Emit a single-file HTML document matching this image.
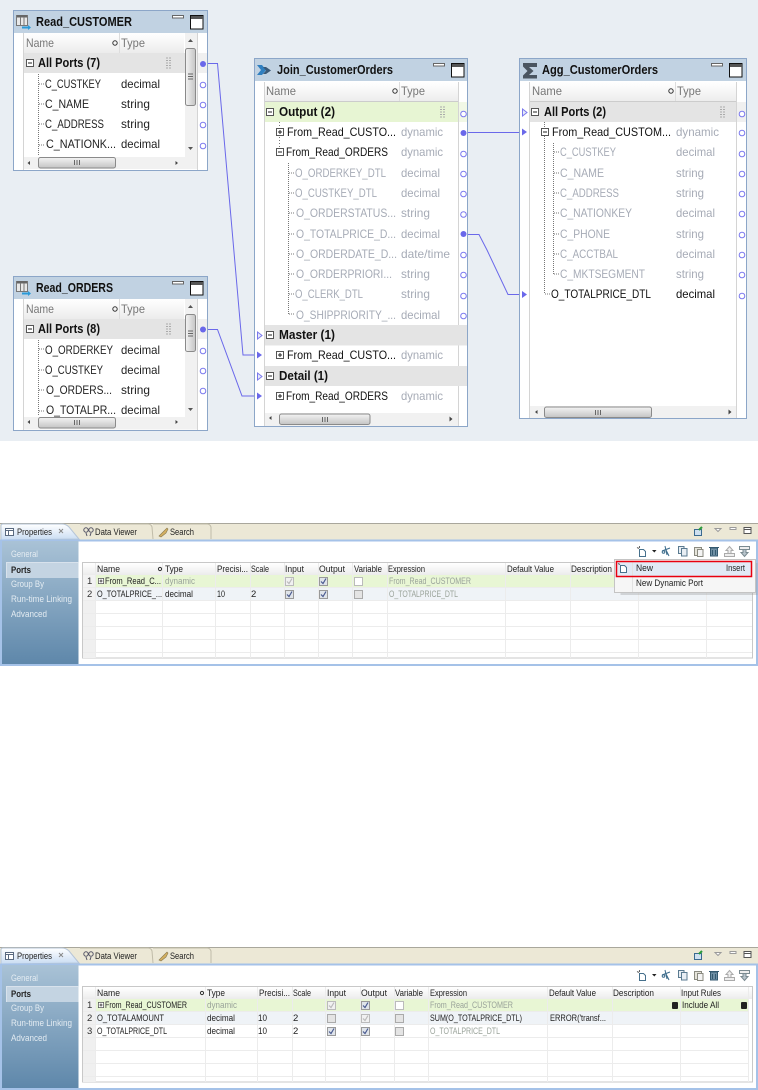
<!DOCTYPE html>
<html><head><meta charset="utf-8"><title>Mapping</title>
<style>
html,body{margin:0;padding:0;background:#fff;width:758px;height:1090px;overflow:hidden}
svg{display:block;font-family:"Liberation Sans",sans-serif}
.b{font-size:12.5px;font-weight:bold;fill:#111}
.h{font-size:12px;fill:#777}
.r{font-size:12px;fill:#222}
.k{font-size:12px;fill:#111}
.g{font-size:12px;fill:#a6abb6}
.s{font-size:9.5px;fill:#222}
.sg{font-size:9.5px;fill:#9aa39a}
.m{font-size:9.5px;fill:#222}
.w{font-size:9.5px;fill:#e4ecf2}
.n{font-size:9.5px;fill:#333}
.soft{filter:blur(.3px)}
</style></head><body>
<svg width="758" height="1090" viewBox="0 0 758 1090" xmlns="http://www.w3.org/2000/svg">
<defs>
<linearGradient id="hd" x1="0" y1="0" x2="0" y2="1"><stop offset="0" stop-color="#fff"/><stop offset="1" stop-color="#ececec"/></linearGradient>
<linearGradient id="th" x1="0" y1="0" x2="0" y2="1"><stop offset="0" stop-color="#f4f4f4"/><stop offset="1" stop-color="#c4c4c4"/></linearGradient>
<linearGradient id="tv" x1="0" y1="0" x2="1" y2="0"><stop offset="0" stop-color="#f4f4f4"/><stop offset="1" stop-color="#c4c4c4"/></linearGradient>
<linearGradient id="side" x1="0" y1="0" x2="0" y2="1"><stop offset="0" stop-color="#a9c2d6"/><stop offset="1" stop-color="#5e87aa"/></linearGradient>
<linearGradient id="tab" x1="0" y1="0" x2="0" y2="1"><stop offset="0" stop-color="#fff"/><stop offset="1" stop-color="#c9dcf2"/></linearGradient>
<g id="o"><circle r="2.8" fill="#fff" stroke="#7a78ee" stroke-width="1"/></g>
<g id="f"><circle r="3" fill="#6a68ea"/></g>
<g id="minus"><rect x=".5" y=".5" width="7" height="7" fill="#fff" stroke="#555"/><path d="M2 4h4" stroke="#222"/></g>
<g id="plus"><rect x=".5" y=".5" width="7" height="7" fill="#fff" stroke="#555"/><path d="M2 4h4M4 2v4" stroke="#222"/></g>
<g id="grip"><path d="M0 0h5M0 2.5h5M0 5h5M0 7.5h5M0 10h5" stroke="#aaa" stroke-dasharray="2 1" fill="none"/></g>
<g id="win"><rect x=".5" y=".5" width="11" height="2.5" fill="#fff" stroke="#666"/><rect x="18.5" y=".5" width="12.5" height="13.5" fill="#fff" stroke="#111"/><rect x="19" y="1" width="12" height="3" fill="#555"/></g>
<g id="tri"><path d="M.5 0L5 3.5.5 7z" fill="#e6eaf8" stroke="#7a78ee"/></g>
<g id="arr"><path d="M0 -3.500L5 0 0 3.500z" fill="#6a68ea"/></g>
<g id="ca"><path d="M0 2L2.500 0v4z" fill="#444"/></g>
<g id="cb"><rect x=".5" y=".5" width="8" height="8" fill="#dfe4ea" stroke="#999"/><path d="M2 4.500l2 2 3-5" fill="none" stroke="#4a5a90" stroke-width="1.200"/></g>
<g id="cg"><rect x=".5" y=".5" width="8" height="8" fill="#f1f1f1" stroke="#bbb"/><path d="M2 4.500l2 2 3-5" fill="none" stroke="#bbb" stroke-width="1.200"/></g>
<g id="ce"><rect x=".5" y=".5" width="8" height="8" fill="#fff" stroke="#bbb"/></g>
<g id="cd"><rect x=".5" y=".5" width="8" height="8" fill="#e4e4e4" stroke="#aaa"/></g>
<g id="tico"><rect x=".5" y="1.500" width="11" height="10" fill="#e8e8e8" stroke="#777"/><rect x="1" y="1" width="10" height="2.500" fill="#666"/><path d="M4.500 3v8M8 3v8" stroke="#777"/><path d="M6 13.500h7" stroke="#2a9ad8" stroke-width="2"/><path d="M12 11l3 2.500-3 2.500z" fill="#2a9ad8"/></g>
<g id="chrome">
<rect x="0" y="523" width="758" height="17" fill="#ece8d6"/>
<path d="M0 523.500H758" stroke="#a9a79c"/>
<path d="M1 540V526q0-2 2-2H62q4 0 7 3l10 12z" fill="url(#tab)" stroke="#b5c5d8"/>
<path d="M80 524H148q3 0 4 3l1 12" fill="none" stroke="#c0bca9"/>
<path d="M153 524H207q3 0 4 3v12" fill="none" stroke="#c0bca9"/>
<rect x="0" y="539.500" width="758" height="2" fill="#a5c2e8"/>
<rect x="0" y="541" width="2" height="125" fill="#a5c2e8"/>
<rect x="756" y="541" width="2" height="125" fill="#a5c2e8"/>
<rect x="0" y="664" width="758" height="2" fill="#a5c2e8"/>
<rect x="2" y="541" width="76.500" height="123" fill="url(#side)"/>
<rect x="6" y="562" width="72.500" height="16" fill="#c4d4e2"/>
<path d="M6.500 578V562.500H78" fill="none" stroke="#d8e2ec"/>
<g transform="translate(5,528)"><rect x=".5" y=".5" width="8" height="7" fill="#fff" stroke="#5a6a80"/><path d="M1 2.500h7M3.500 2.500v5" stroke="#5a6a80"/></g>
<path d="M59 529l4 4m0-4l-4 4" stroke="#888" fill="none"/>
<g transform="translate(83,527)" fill="none" stroke="#556"><circle cx="3" cy="3" r="2.200"/><circle cx="8" cy="3" r="2.200"/><path d="M3 6l1 3M8 6l-1 3"/></g>
<g transform="translate(158,527)"><path d="M1 9l5-5 3-3 1 1-2 4-5 4z" fill="#d4b060" stroke="#8a7a50" stroke-width=".6"/></g>
<g transform="translate(694,526)"><rect x=".5" y="3.500" width="7" height="6" fill="#cfe0f0" stroke="#3a6a90"/><path d="M5 4l3-3" stroke="#2a9a3a" stroke-width="2"/></g>
<path d="M715 528.500h6l-3 3z" fill="#fff" stroke="#9a9a9a"/>
<rect x="730" y="527.500" width="6" height="2" fill="#fff" stroke="#9a9a9a"/>
<rect x="744" y="527.500" width="7" height="6" fill="#fff" stroke="#555"/><path d="M744 529.500h7" stroke="#555"/>
<g transform="translate(637,546)" fill="none" stroke="#46708c"><path d="M2.500 3.500h4l2 2v5h-6z" fill="#fff"/><path d="M0 1.500l2 1M2.500 0v2" stroke="#666"/></g>
<path d="M652 550h4.500l-2.200 2.500z" fill="#222"/>
<g transform="translate(662,546)" fill="none" stroke="#3a6a8a"><path d="M0 5l8-3M4 4l3 6M3 0l2 9"/><circle cx="1.500" cy="6" r="1.300"/></g>
<g transform="translate(678,546)" stroke="#5a7a90" fill="#e8eef4"><rect x=".5" y=".5" width="5.500" height="7"/><rect x="3.500" y="2.500" width="5.500" height="7.500"/></g>
<g transform="translate(694,546)" stroke="#8a8a80" fill="#e6e4da"><rect x=".5" y="1.500" width="7" height="8"/><rect x="3.500" y="3.500" width="5.500" height="7" fill="#f4f4f4"/></g>
<g transform="translate(709,546)"><rect x="1.500" y="2" width="7" height="8" fill="#6f8fa4" stroke="#355a70"/><path d="M0 1.500h10M3.500 4v5M6.500 4v5" stroke="#355a70"/></g>
<g transform="translate(724,546)" stroke="#aaa" fill="#eee"><path d="M.5 7.500h10v3h-10z"/><path d="M5.500 .5l3.500 4h-2v3h-3v-3h-2z"/></g>
<g transform="translate(739,546)" stroke="#7a8a90" fill="#eee"><path d="M.5 .5h10v3h-10z"/><path d="M5.500 10.500l3.500-4h-2v-3h-3v3h-2z" fill="#b8c4cc"/></g>
</g>
</defs>

<rect x="0" y="0" width="758" height="441" fill="#e9eef3"/>

<!-- links -->
<g fill="none" stroke="#6a68ea" stroke-width="1">
<path d="M204 63.500H217.500L243 355H258"/>
<path d="M204 329.500H217.500L242 396H258"/>
<path d="M464 132.500H523"/>
<path d="M464 234.500H479L487 250 508 294.500H523"/>
</g>

<!-- Read_CUSTOMER -->
<rect x="13.500" y="10.500" width="194" height="160" fill="#fff" stroke="#8ca6c8"/>
<rect x="14" y="11" width="193" height="22" fill="#c1d2e2"/>
<use href="#tico" x="16" y="14"/>
<text x="36" y="26" class="b" textLength="96" lengthAdjust="spacingAndGlyphs">Read_CUSTOMER</text>
<use href="#win" x="172" y="15"/>
<rect x="24" y="33" width="160" height="20" fill="url(#hd)"/>
<path d="M23.500 33V170M197.500 33V170" stroke="#d4d4d4"/>
<path d="M119.500 33V53" stroke="#ddd"/>
<text x="26" y="47" class="h" textLength="28" lengthAdjust="spacingAndGlyphs">Name</text>
<text x="121" y="47" class="h" textLength="24" lengthAdjust="spacingAndGlyphs">Type</text>
<circle cx="115" cy="43" r="2.200" fill="none" stroke="#333"/>
<rect x="24" y="53" width="161" height="20" fill="#e4e4e4"/>
<rect x="198" y="53" width="9" height="20" fill="#f0f0f0"/>
<use href="#minus" x="26" y="59"/>
<text x="38" y="67" class="b" textLength="62" lengthAdjust="spacingAndGlyphs">All Ports (7)</text>
<use href="#grip" x="166" y="58"/>
<path d="M38.500 74V156" stroke="#777" stroke-dasharray="1 1"/>
<path d="M39 84h5M39 104h5M39 124h5M39 145h5" stroke="#777" stroke-dasharray="1 1"/>
<text x="45" y="88" class="r" textLength="56" lengthAdjust="spacingAndGlyphs">C_CUSTKEY</text>
<text x="121" y="88" class="r" textLength="39" lengthAdjust="spacingAndGlyphs">decimal</text>
<text x="45" y="108" class="r" textLength="44" lengthAdjust="spacingAndGlyphs">C_NAME</text>
<text x="121" y="108" class="r" textLength="29" lengthAdjust="spacingAndGlyphs">string</text>
<text x="45" y="128" class="r" textLength="59" lengthAdjust="spacingAndGlyphs">C_ADDRESS</text>
<text x="121" y="128" class="r" textLength="29" lengthAdjust="spacingAndGlyphs">string</text>
<text x="46" y="148" class="r" textLength="70" lengthAdjust="spacingAndGlyphs">C_NATIONK...</text>
<text x="121" y="148" class="r" textLength="39" lengthAdjust="spacingAndGlyphs">decimal</text>
<rect x="185" y="33" width="12" height="124" fill="#f1f1f1"/>
<path d="M188 42l2.500-3 2.500 3z" fill="#555"/>
<path d="M188 147l2.500 3 2.500-3z" fill="#555"/>
<rect x="185.500" y="48.500" width="10" height="57" rx="2" fill="url(#tv)" stroke="#8a8a8a"/>
<path d="M188 74h5M188 76.500h5M188 79h5" stroke="#666"/>
<rect x="24" y="157" width="173" height="12" fill="#f1f1f1"/>
<use href="#ca" x="27.500" y="161"/>
<rect x="38.500" y="157.500" width="77" height="10.500" rx="2" fill="url(#th)" stroke="#8a8a8a"/>
<path d="M74.500 160v5M77 160v5M79.500 160v5" stroke="#666"/>
<path d="M175.500 161l2.500 2-2.500 2z" fill="#444"/>
<use href="#f" x="203" y="64"/>
<use href="#o" x="203" y="85"/><use href="#o" x="203" y="105"/><use href="#o" x="203" y="125"/><use href="#o" x="203" y="146"/>

<!-- Read_ORDERS -->
<rect x="13.500" y="276.500" width="194" height="154" fill="#fff" stroke="#8ca6c8"/>
<rect x="14" y="277" width="193" height="22" fill="#c1d2e2"/>
<use href="#tico" x="16" y="280"/>
<text x="36" y="292" class="b" textLength="77" lengthAdjust="spacingAndGlyphs">Read_ORDERS</text>
<use href="#win" x="172" y="281"/>
<rect x="24" y="299" width="160" height="20" fill="url(#hd)"/>
<path d="M23.500 299V430M197.500 299V430" stroke="#d4d4d4"/>
<path d="M119.500 299V319" stroke="#ddd"/>
<text x="26" y="313" class="h" textLength="28" lengthAdjust="spacingAndGlyphs">Name</text>
<text x="121" y="313" class="h" textLength="24" lengthAdjust="spacingAndGlyphs">Type</text>
<circle cx="115" cy="309" r="2.200" fill="none" stroke="#333"/>
<rect x="24" y="319" width="161" height="20" fill="#e4e4e4"/>
<rect x="198" y="319" width="9" height="20" fill="#f0f0f0"/>
<use href="#minus" x="26" y="325"/>
<text x="38" y="333" class="b" textLength="62" lengthAdjust="spacingAndGlyphs">All Ports (8)</text>
<use href="#grip" x="166" y="324"/>
<path d="M38.500 340V416" stroke="#777" stroke-dasharray="1 1"/>
<path d="M39 349h5M39 370h5M39 390h5M39 411h5" stroke="#777" stroke-dasharray="1 1"/>
<text x="45" y="354" class="r" textLength="68" lengthAdjust="spacingAndGlyphs">O_ORDERKEY</text>
<text x="121" y="354" class="r" textLength="39" lengthAdjust="spacingAndGlyphs">decimal</text>
<text x="45" y="374" class="r" textLength="58" lengthAdjust="spacingAndGlyphs">O_CUSTKEY</text>
<text x="121" y="374" class="r" textLength="39" lengthAdjust="spacingAndGlyphs">decimal</text>
<text x="46" y="394" class="r" textLength="66" lengthAdjust="spacingAndGlyphs">O_ORDERS...</text>
<text x="121" y="394" class="r" textLength="29" lengthAdjust="spacingAndGlyphs">string</text>
<text x="46" y="414" class="r" textLength="70" lengthAdjust="spacingAndGlyphs">O_TOTALPR...</text>
<text x="121" y="414" class="r" textLength="39" lengthAdjust="spacingAndGlyphs">decimal</text>
<rect x="185" y="299" width="12" height="118" fill="#f1f1f1"/>
<path d="M188 308l2.500-3 2.500 3z" fill="#555"/>
<path d="M188 408l2.500 3 2.500-3z" fill="#555"/>
<rect x="185.500" y="314.500" width="10" height="37" rx="2" fill="url(#tv)" stroke="#8a8a8a"/>
<path d="M188 331h5M188 333.500h5M188 336h5" stroke="#666"/>
<rect x="24" y="417" width="173" height="12.500" fill="#f1f1f1"/>
<use href="#ca" x="27.500" y="420"/>
<rect x="38.500" y="417.500" width="77" height="10.500" rx="2" fill="url(#th)" stroke="#8a8a8a"/>
<path d="M74.500 420v5M77 420v5M79.500 420v5" stroke="#666"/>
<path d="M175.500 420l2.500 2-2.500 2z" fill="#444"/>
<use href="#f" x="203" y="329.500"/>
<use href="#o" x="203" y="351"/><use href="#o" x="203" y="371"/><use href="#o" x="203" y="391"/>

<!-- Join -->
<rect x="254.500" y="58.500" width="213" height="368" fill="#fff" stroke="#8ca6c8"/>
<rect x="255" y="59" width="212" height="22" fill="#c1d2e2"/>
<g transform="translate(257,65)"><path d="M0 0h5l4 5-4 5H0l4-5z" fill="#2f7fc0"/><path d="M6 2h3l5 3.500-5 3.500H6l3-3.500z" fill="#3a5a78"/></g>
<text x="277" y="74" class="b" textLength="116" lengthAdjust="spacingAndGlyphs">Join_CustomerOrders</text>
<use href="#win" x="433" y="63"/>
<rect x="265" y="82" width="193" height="20" fill="url(#hd)"/>
<path d="M264.500 82V426M458.500 82V426" stroke="#d4d4d4"/>
<path d="M399.500 82V102" stroke="#ddd"/>
<path d="M265 101.500H458" stroke="#ccc"/>
<text x="266" y="95" class="h" textLength="30" lengthAdjust="spacingAndGlyphs">Name</text>
<text x="401" y="95" class="h" textLength="24" lengthAdjust="spacingAndGlyphs">Type</text>
<circle cx="395" cy="91" r="2.200" fill="none" stroke="#333"/>
<rect x="265" y="102" width="193" height="20" fill="#e7f5d3"/>
<rect x="459" y="102" width="8" height="20" fill="#f1f8e6"/>
<use href="#minus" x="266" y="108"/>
<text x="279" y="116" class="b" textLength="56" lengthAdjust="spacingAndGlyphs">Output (2)</text>
<use href="#grip" x="440" y="107"/>
<path d="M279.500 122V148" stroke="#777" stroke-dasharray="1 2"/>
<use href="#plus" x="276" y="128"/>
<text x="287" y="136" class="k" textLength="109" lengthAdjust="spacingAndGlyphs">From_Read_CUSTO...</text>
<text x="401" y="136" class="g" textLength="42" lengthAdjust="spacingAndGlyphs">dynamic</text>
<use href="#minus" x="276" y="148"/>
<text x="286" y="156" class="k" textLength="102" lengthAdjust="spacingAndGlyphs">From_Read_ORDERS</text>
<text x="401" y="156" class="g" textLength="42" lengthAdjust="spacingAndGlyphs">dynamic</text>
<path d="M288.500 163V314" stroke="#777" stroke-dasharray="1 1"/>
<path d="M289 173h5M289 193h5M289 213h5M289 234h5M289 254h5M289 274h5M289 294h5M289 314h5" stroke="#777" stroke-dasharray="1 1"/>
<text x="295" y="177" class="g" textLength="91" lengthAdjust="spacingAndGlyphs">O_ORDERKEY_DTL</text><text x="401" y="177" class="g" textLength="39" lengthAdjust="spacingAndGlyphs">decimal</text>
<text x="295" y="197" class="g" textLength="82" lengthAdjust="spacingAndGlyphs">O_CUSTKEY_DTL</text><text x="401" y="197" class="g" textLength="39" lengthAdjust="spacingAndGlyphs">decimal</text>
<text x="296" y="217" class="g" textLength="100" lengthAdjust="spacingAndGlyphs">O_ORDERSTATUS...</text><text x="401" y="217" class="g" textLength="29" lengthAdjust="spacingAndGlyphs">string</text>
<text x="296" y="238" class="g" textLength="100" lengthAdjust="spacingAndGlyphs">O_TOTALPRICE_D...</text><text x="401" y="238" class="g" textLength="39" lengthAdjust="spacingAndGlyphs">decimal</text>
<text x="296" y="258" class="g" textLength="101" lengthAdjust="spacingAndGlyphs">O_ORDERDATE_D...</text><text x="401" y="258" class="g" textLength="49" lengthAdjust="spacingAndGlyphs">date/time</text>
<text x="296" y="278" class="g" textLength="96" lengthAdjust="spacingAndGlyphs">O_ORDERPRIORI...</text><text x="401" y="278" class="g" textLength="29" lengthAdjust="spacingAndGlyphs">string</text>
<text x="295" y="298" class="g" textLength="68" lengthAdjust="spacingAndGlyphs">O_CLERK_DTL</text><text x="401" y="298" class="g" textLength="29" lengthAdjust="spacingAndGlyphs">string</text>
<text x="296" y="319" class="g" textLength="100" lengthAdjust="spacingAndGlyphs">O_SHIPPRIORITY_...</text><text x="401" y="319" class="g" textLength="39" lengthAdjust="spacingAndGlyphs">decimal</text>
<rect x="265" y="325" width="202" height="20.500" fill="#e4e4e4"/>
<use href="#tri" x="257" y="332"/>
<use href="#minus" x="266" y="331"/>
<text x="279" y="339" class="b" textLength="56" lengthAdjust="spacingAndGlyphs">Master (1)</text>
<use href="#plus" x="276" y="351"/>
<text x="287" y="359" class="k" textLength="109" lengthAdjust="spacingAndGlyphs">From_Read_CUSTO...</text>
<text x="401" y="359" class="g" textLength="42" lengthAdjust="spacingAndGlyphs">dynamic</text>
<rect x="265" y="366" width="202" height="20" fill="#e4e4e4"/>
<use href="#tri" x="257" y="373"/>
<use href="#minus" x="266" y="372"/>
<text x="279" y="380" class="b" textLength="49" lengthAdjust="spacingAndGlyphs">Detail (1)</text>
<use href="#plus" x="276" y="392"/>
<text x="286" y="400" class="k" textLength="102" lengthAdjust="spacingAndGlyphs">From_Read_ORDERS</text>
<text x="401" y="400" class="g" textLength="42" lengthAdjust="spacingAndGlyphs">dynamic</text>
<rect x="265" y="413" width="193" height="13" fill="#f1f1f1"/>
<use href="#ca" x="269" y="416"/>
<rect x="279.500" y="414" width="90.500" height="10.500" rx="2" fill="url(#th)" stroke="#8a8a8a"/>
<path d="M322.500 417v5M325 417v5M327.500 417v5" stroke="#666"/>
<path d="M449.500 416.500l3 2.500-3 2.500z" fill="#444"/>
<use href="#arr" x="257" y="355"/><use href="#arr" x="257" y="396"/>
<use href="#o" x="463.500" y="114"/><use href="#f" x="463.500" y="133"/><use href="#o" x="463.500" y="154"/><use href="#o" x="463.500" y="174"/><use href="#o" x="463.500" y="194"/><use href="#o" x="463.500" y="214.500"/><use href="#f" x="463.500" y="234"/><use href="#o" x="463.500" y="255"/><use href="#o" x="463.500" y="275"/><use href="#o" x="463.500" y="296"/><use href="#o" x="463.500" y="316"/>

<!-- Agg -->
<rect x="519.500" y="58.500" width="227" height="360" fill="#fff" stroke="#8ca6c8"/>
<rect x="520" y="59" width="226" height="22" fill="#c1d2e2"/>
<path d="M523 63H537V67H529L533.500 71 529 75H537V78.500H523V75.500L527.500 71 523 66.500z" fill="#4a5560"/>
<text x="542" y="74" class="b" textLength="116" lengthAdjust="spacingAndGlyphs">Agg_CustomerOrders</text>
<use href="#win" x="711" y="63"/>
<rect x="530" y="82" width="206" height="20" fill="url(#hd)"/>
<path d="M529.500 82V418M736.500 82V418" stroke="#d4d4d4"/>
<path d="M675.500 82V102" stroke="#ddd"/>
<path d="M530 101.500H736" stroke="#ccc"/>
<text x="532" y="95" class="h" textLength="30" lengthAdjust="spacingAndGlyphs">Name</text>
<text x="677" y="95" class="h" textLength="24" lengthAdjust="spacingAndGlyphs">Type</text>
<circle cx="671" cy="91" r="2.200" fill="none" stroke="#333"/>
<rect x="530" y="102" width="206" height="20" fill="#e4e4e4"/>
<rect x="737" y="102" width="9" height="20" fill="#f0f0f0"/>
<use href="#tri" x="522" y="109"/>
<use href="#minus" x="531" y="108"/>
<text x="544" y="116" class="b" textLength="62" lengthAdjust="spacingAndGlyphs">All Ports (2)</text>
<use href="#grip" x="720" y="107"/>
<path d="M544.500 122V294" stroke="#777" stroke-dasharray="1 1"/>
<path d="M553.500 143V274" stroke="#777" stroke-dasharray="1 1"/>
<path d="M554 152h5M554 173h5M554 193h5M554 213h5M554 234h5M554 254h5M554 274h5M545 294h5" stroke="#777" stroke-dasharray="1 1"/>
<use href="#minus" x="541" y="128"/>
<text x="552" y="136" class="k" textLength="119" lengthAdjust="spacingAndGlyphs">From_Read_CUSTOM...</text>
<text x="676" y="136" class="g" textLength="43" lengthAdjust="spacingAndGlyphs">dynamic</text>
<text x="560" y="156" class="g" textLength="56" lengthAdjust="spacingAndGlyphs">C_CUSTKEY</text><text x="676" y="156" class="g" textLength="39" lengthAdjust="spacingAndGlyphs">decimal</text>
<text x="560" y="177" class="g" textLength="44" lengthAdjust="spacingAndGlyphs">C_NAME</text><text x="676" y="177" class="g" textLength="28" lengthAdjust="spacingAndGlyphs">string</text>
<text x="560" y="197" class="g" textLength="59" lengthAdjust="spacingAndGlyphs">C_ADDRESS</text><text x="676" y="197" class="g" textLength="28" lengthAdjust="spacingAndGlyphs">string</text>
<text x="560" y="217" class="g" textLength="72" lengthAdjust="spacingAndGlyphs">C_NATIONKEY</text><text x="676" y="217" class="g" textLength="39" lengthAdjust="spacingAndGlyphs">decimal</text>
<text x="560" y="238" class="g" textLength="50" lengthAdjust="spacingAndGlyphs">C_PHONE</text><text x="676" y="238" class="g" textLength="28" lengthAdjust="spacingAndGlyphs">string</text>
<text x="560" y="258" class="g" textLength="58" lengthAdjust="spacingAndGlyphs">C_ACCTBAL</text><text x="676" y="258" class="g" textLength="39" lengthAdjust="spacingAndGlyphs">decimal</text>
<text x="560" y="278" class="g" textLength="85" lengthAdjust="spacingAndGlyphs">C_MKTSEGMENT</text><text x="676" y="278" class="g" textLength="28" lengthAdjust="spacingAndGlyphs">string</text>
<text x="551" y="298" class="k" textLength="100" lengthAdjust="spacingAndGlyphs">O_TOTALPRICE_DTL</text><text x="676" y="298" class="k" textLength="39" lengthAdjust="spacingAndGlyphs">decimal</text>
<rect x="530" y="406" width="206" height="12" fill="#f1f1f1"/>
<use href="#ca" x="535" y="410"/>
<rect x="544.500" y="407" width="107" height="10.500" rx="2" fill="url(#th)" stroke="#8a8a8a"/>
<path d="M595.500 410v5M598 410v5M600.500 410v5" stroke="#666"/>
<path d="M728.500 409.500l3 2.500-3 2.500z" fill="#444"/>
<use href="#arr" x="522" y="132"/><use href="#arr" x="522" y="294.500"/>
<use href="#o" x="742" y="114"/><use href="#o" x="742" y="133"/><use href="#o" x="742" y="154"/><use href="#o" x="742" y="174"/><use href="#o" x="742" y="194"/><use href="#o" x="742" y="214"/><use href="#o" x="742" y="235"/><use href="#o" x="742" y="255"/><use href="#o" x="742" y="275"/><use href="#o" x="742" y="296"/>

<!-- Panel 1 -->
<g class="soft">
<use href="#chrome"/>
<text x="17" y="535" class="s" textLength="35" lengthAdjust="spacingAndGlyphs">Properties</text>
<text x="95" y="535" class="s" textLength="42" lengthAdjust="spacingAndGlyphs">Data Viewer</text>
<text x="170" y="535" class="s" textLength="24" lengthAdjust="spacingAndGlyphs">Search</text>
<text x="11" y="557" class="w" textLength="27" lengthAdjust="spacingAndGlyphs">General</text>
<text x="11" y="573" class="s" font-weight="bold" textLength="20" lengthAdjust="spacingAndGlyphs">Ports</text>
<text x="11" y="587" class="w" textLength="33" lengthAdjust="spacingAndGlyphs">Group By</text>
<text x="11" y="602" class="w" textLength="61" lengthAdjust="spacingAndGlyphs">Run-time Linking</text>
<text x="11" y="617" class="w" textLength="36" lengthAdjust="spacingAndGlyphs">Advanced</text>
<rect x="82.500" y="562.500" width="670" height="95.500" fill="#fff" stroke="#c8c8c8"/>
<rect x="83" y="563" width="669" height="12" fill="url(#hd)"/>
<rect x="83" y="575" width="669" height="13" fill="#e8f6d4"/>
<rect x="83" y="588" width="669" height="13" fill="#eff3f7"/>
<rect x="83" y="575" width="12" height="83" fill="#f0f0f0"/>
<rect x="83" y="575" width="12" height="26" fill="#f2f2f2"/>
<path d="M83 575H752M83 588H752M83 601H752M83 614H752M83 627H752M83 640H752M83 653H752" stroke="#ececec" transform="translate(0,-.5)"/>
<path d="M95.500 563V658M162.500 563V658M215.500 563V658M250.500 563V658M284.500 563V658M318.500 563V658M352.500 563V658M387.500 563V658M505.500 563V658M570.500 563V658M638.500 563V658M706.500 563V658" stroke="#ececec"/>
<text x="97" y="572" class="m" textLength="23" lengthAdjust="spacingAndGlyphs">Name</text>
<text x="165" y="572" class="m" textLength="18" lengthAdjust="spacingAndGlyphs">Type</text>
<text x="217" y="572" class="m" textLength="31" lengthAdjust="spacingAndGlyphs">Precisi...</text>
<text x="251" y="572" class="m" textLength="18" lengthAdjust="spacingAndGlyphs">Scale</text>
<text x="285" y="572" class="m" textLength="19" lengthAdjust="spacingAndGlyphs">Input</text>
<text x="319" y="572" class="m" textLength="26" lengthAdjust="spacingAndGlyphs">Output</text>
<text x="354" y="572" class="m" textLength="28" lengthAdjust="spacingAndGlyphs">Variable</text>
<text x="388" y="572" class="m" textLength="37" lengthAdjust="spacingAndGlyphs">Expression</text>
<text x="507" y="572" class="m" textLength="47" lengthAdjust="spacingAndGlyphs">Default Value</text>
<text x="571" y="572" class="m" textLength="41" lengthAdjust="spacingAndGlyphs">Description</text>
<circle cx="160" cy="569" r="1.600" fill="none" stroke="#333"/>
<text x="87" y="584" class="n">1</text><text x="87" y="597" class="n">2</text>
<use href="#plus" transform="translate(98,578) scale(.75)"/>
<text x="105" y="584" class="m" textLength="56" lengthAdjust="spacingAndGlyphs">From_Read_C...</text>
<text x="165" y="584" class="sg" textLength="30" lengthAdjust="spacingAndGlyphs">dynamic</text>
<use href="#cg" x="285" y="577"/><use href="#cb" x="319" y="577"/><use href="#ce" x="354" y="577"/>
<text x="389" y="584" class="sg" textLength="82" lengthAdjust="spacingAndGlyphs">From_Read_CUSTOMER</text>
<text x="97" y="597" class="m" textLength="65" lengthAdjust="spacingAndGlyphs">O_TOTALPRICE_...</text>
<text x="165" y="597" class="m" textLength="28" lengthAdjust="spacingAndGlyphs">decimal</text>
<text x="217" y="597" class="m" textLength="8" lengthAdjust="spacingAndGlyphs">10</text>
<text x="251" y="597" class="m">2</text>
<use href="#cb" x="285" y="590"/><use href="#cb" x="319" y="590"/><use href="#cd" x="354" y="590"/>
<text x="389" y="597" class="sg" textLength="69" lengthAdjust="spacingAndGlyphs">O_TOTALPRICE_DTL</text>
<rect x="618.500" y="561" width="137" height="32" fill="#999" opacity=".35" transform="translate(2,2)"/>
<rect x="614.500" y="559.500" width="141" height="33" fill="#f6f6f6" stroke="#c4c4c4"/>
<rect x="617" y="562" width="134" height="14" fill="#e2eaf6"/>
<path d="M632.500 561V592" stroke="#e2e2e2"/>
<g transform="translate(618,563)" fill="none" stroke="#46708c"><path d="M2.500 2.500h4l2 2v5h-6z" fill="#fff"/><path d="M0 .5l2 1" stroke="#666"/></g>
<text x="636" y="571" class="m" textLength="17" lengthAdjust="spacingAndGlyphs">New</text>
<text x="726" y="571" class="m" textLength="19" lengthAdjust="spacingAndGlyphs">Insert</text>
<text x="636" y="586" class="m" textLength="67" lengthAdjust="spacingAndGlyphs">New Dynamic Port</text>
<rect x="616.500" y="561.500" width="135" height="15" fill="none" stroke="#e8000f" stroke-width="1.500"/>
</g>

<!-- Panel 2 -->
<g class="soft">
<g transform="translate(0,424)"><use href="#chrome"/></g>
<text x="17" y="959" class="s" textLength="35" lengthAdjust="spacingAndGlyphs">Properties</text>
<text x="95" y="959" class="s" textLength="42" lengthAdjust="spacingAndGlyphs">Data Viewer</text>
<text x="170" y="959" class="s" textLength="24" lengthAdjust="spacingAndGlyphs">Search</text>
<text x="11" y="981" class="w" textLength="27" lengthAdjust="spacingAndGlyphs">General</text>
<text x="11" y="997" class="s" font-weight="bold" textLength="20" lengthAdjust="spacingAndGlyphs">Ports</text>
<text x="11" y="1011" class="w" textLength="33" lengthAdjust="spacingAndGlyphs">Group By</text>
<text x="11" y="1026" class="w" textLength="61" lengthAdjust="spacingAndGlyphs">Run-time Linking</text>
<text x="11" y="1041" class="w" textLength="36" lengthAdjust="spacingAndGlyphs">Advanced</text>
<rect x="82.500" y="986.500" width="670" height="95.500" fill="#fff" stroke="#c8c8c8"/>
<rect x="83" y="987" width="669" height="12" fill="url(#hd)"/>
<rect x="83" y="999" width="665" height="13" fill="#e8f6d4"/>
<rect x="83" y="1012" width="665" height="13" fill="#eff3f7"/>
<rect x="83" y="999" width="12" height="83" fill="#f0f0f0"/>
<path d="M83 999H748M83 1012H748M83 1025H748M83 1038H748M83 1051H748M83 1064H748M83 1077H748" stroke="#ececec" transform="translate(0,-.5)"/>
<path d="M95.500 987V1082M205.500 987V1082M257.500 987V1082M292.500 987V1082M325.500 987V1082M360.500 987V1082M394.500 987V1082M428.500 987V1082M547.500 987V1082M612.500 987V1082M680.500 987V1082M748.500 987V1082" stroke="#ececec"/>
<text x="97" y="996" class="m" textLength="23" lengthAdjust="spacingAndGlyphs">Name</text>
<text x="207" y="996" class="m" textLength="18" lengthAdjust="spacingAndGlyphs">Type</text>
<text x="259" y="996" class="m" textLength="31" lengthAdjust="spacingAndGlyphs">Precisi...</text>
<text x="293" y="996" class="m" textLength="18" lengthAdjust="spacingAndGlyphs">Scale</text>
<text x="327" y="996" class="m" textLength="19" lengthAdjust="spacingAndGlyphs">Input</text>
<text x="361" y="996" class="m" textLength="26" lengthAdjust="spacingAndGlyphs">Output</text>
<text x="395" y="996" class="m" textLength="28" lengthAdjust="spacingAndGlyphs">Variable</text>
<text x="430" y="996" class="m" textLength="37" lengthAdjust="spacingAndGlyphs">Expression</text>
<text x="549" y="996" class="m" textLength="47" lengthAdjust="spacingAndGlyphs">Default Value</text>
<text x="613" y="996" class="m" textLength="41" lengthAdjust="spacingAndGlyphs">Description</text>
<text x="681" y="996" class="m" textLength="40" lengthAdjust="spacingAndGlyphs">Input Rules</text>
<circle cx="202" cy="993" r="1.600" fill="none" stroke="#333"/>
<text x="87" y="1008" class="n">1</text><text x="87" y="1021" class="n">2</text><text x="87" y="1034" class="n">3</text>
<use href="#plus" transform="translate(98,1002) scale(.75)"/>
<text x="105" y="1008" class="m" textLength="82" lengthAdjust="spacingAndGlyphs">From_Read_CUSTOMER</text>
<text x="207" y="1008" class="sg" textLength="30" lengthAdjust="spacingAndGlyphs">dynamic</text>
<use href="#cg" x="327" y="1001"/><use href="#cb" x="361" y="1001"/><use href="#ce" x="395" y="1001"/>
<text x="430" y="1008" class="sg" textLength="83" lengthAdjust="spacingAndGlyphs">From_Read_CUSTOMER</text>
<rect x="672" y="1002" width="6" height="7" rx="1" fill="#222"/><rect x="741" y="1002" width="6" height="7" rx="1" fill="#222"/>
<text x="682" y="1008" class="m" textLength="37" lengthAdjust="spacingAndGlyphs">Include All</text>
<text x="97" y="1021" class="m" textLength="67" lengthAdjust="spacingAndGlyphs">O_TOTALAMOUNT</text>
<text x="207" y="1021" class="m" textLength="28" lengthAdjust="spacingAndGlyphs">decimal</text>
<text x="258" y="1021" class="m" textLength="9" lengthAdjust="spacingAndGlyphs">10</text>
<text x="293" y="1021" class="m">2</text>
<use href="#cd" x="327" y="1014"/><use href="#cg" x="361" y="1014"/><use href="#cd" x="395" y="1014"/>
<text x="430" y="1021" class="m" textLength="92" lengthAdjust="spacingAndGlyphs">SUM(O_TOTALPRICE_DTL)</text>
<text x="550" y="1021" class="m" textLength="56" lengthAdjust="spacingAndGlyphs">ERROR('transf...</text>
<text x="97" y="1034" class="m" textLength="70" lengthAdjust="spacingAndGlyphs">O_TOTALPRICE_DTL</text>
<text x="207" y="1034" class="m" textLength="28" lengthAdjust="spacingAndGlyphs">decimal</text>
<text x="258" y="1034" class="m" textLength="9" lengthAdjust="spacingAndGlyphs">10</text>
<text x="293" y="1034" class="m">2</text>
<use href="#cb" x="327" y="1027"/><use href="#cb" x="361" y="1027"/><use href="#cd" x="395" y="1027"/>
<text x="430" y="1034" class="sg" textLength="70" lengthAdjust="spacingAndGlyphs">O_TOTALPRICE_DTL</text>
</g>
</svg>
</body></html>
